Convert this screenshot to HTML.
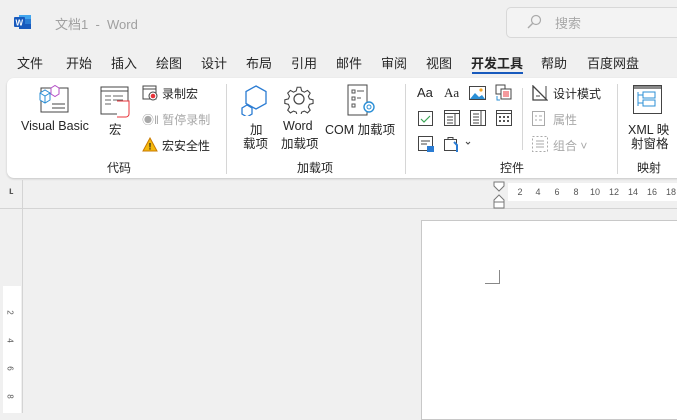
<!DOCTYPE html>
<html><head><meta charset="utf-8"><style>
*{margin:0;padding:0;box-sizing:border-box}
body{width:677px;height:413px;background:#f0f0f0;font-family:"Liberation Sans","Noto Sans CJK SC",sans-serif;position:relative;overflow:hidden;color:#262626}
.a{position:absolute;white-space:nowrap}
.t{font-size:13px;top:53px}
.r{font-size:12.5px}
.s{font-size:12px}
.g{color:#a8a8a8}
.sep{position:absolute;width:1px;background:#d6d6d6}
.n{position:absolute;top:187px;font-size:9px;color:#555;transform:translateX(-50%)}
.v{position:absolute;left:8px;font-size:8px;color:#555;transform:rotate(90deg)}
</style></head><body>
<svg class="a" style="left:14px;top:14px" width="18" height="16"><rect x="5" y="1" width="12" height="14" fill="#41a5ee"/><rect x="5" y="5" width="12" height="5" fill="#2b7cd3"/><rect x="5" y="10" width="12" height="5" fill="#185abd"/><rect x="0" y="3" width="11" height="10" rx="1" fill="#185abd"/><text x="1.5" y="11.5" font-size="8" fill="#fff" font-weight="bold" font-family="Liberation Sans">W</text></svg>
<div class="a" style="left:55px;top:14px;font-size:13px;color:#a0a0a0">文档1 &nbsp;- &nbsp;Word</div>
<div class="a" style="left:506px;top:7px;width:180px;height:31px;border:1px solid #d8d8d8;border-radius:5px;background:#f3f3f3"></div>
<svg class="a" style="left:526px;top:14px" width="16" height="16"><circle cx="10" cy="6" r="4.5" fill="none" stroke="#aaa" stroke-width="1.2"/><line x1="6.5" y1="9.5" x2="2" y2="14" stroke="#aaa" stroke-width="1.4"/></svg>
<div class="a" style="left:555px;top:13px;font-size:13px;color:#a8a8a8">搜索</div>
<div class="a t" style="left:17px">文件</div>
<div class="a t" style="left:66px">开始</div>
<div class="a t" style="left:111px">插入</div>
<div class="a t" style="left:156px">绘图</div>
<div class="a t" style="left:201px">设计</div>
<div class="a t" style="left:246px">布局</div>
<div class="a t" style="left:291px">引用</div>
<div class="a t" style="left:336px">邮件</div>
<div class="a t" style="left:381px">审阅</div>
<div class="a t" style="left:426px">视图</div>
<div class="a t" style="left:471px;font-weight:bold">开发工具</div>
<div class="a" style="left:472px;top:72px;width:51px;height:2px;background:#185abd"></div>
<div class="a t" style="left:541px">帮助</div>
<div class="a t" style="left:587px">百度网盘</div>
<div class="a" style="left:7px;top:78px;width:680px;height:100px;background:#fff;border-radius:7px;box-shadow:0 1px 2px rgba(0,0,0,.18)"></div>
<svg class="a" style="left:38px;top:84px" width="32" height="30"><rect x="3" y="4" width="27" height="24" fill="none" stroke="#444" stroke-width="1"/><line x1="14" y1="20" x2="27" y2="20" stroke="#444"/><line x1="14" y1="24" x2="27" y2="24" stroke="#444"/><path d="M2 9 l5-3 5 3v7l-5 3-5-3z" fill="#fff" stroke="#2b8fd6"/><path d="M2 9l5 3 5-3M7 12v7" fill="none" stroke="#2b8fd6"/><path d="M13 4l4-2.5 4 2.5v6l-4 2.5-4-2.5z" fill="#fff" stroke="#b44ec7"/></svg>
<div class="a r" style="left:21px;top:119px">Visual Basic</div>
<svg class="a" style="left:100px;top:86px" width="32" height="32"><rect x="1" y="1" width="27" height="27" fill="#fff" stroke="#444"/><line x1="1" y1="5" x2="28" y2="5" stroke="#444"/><path d="M5 10h6M13 10h10M5 14h6M13 14h10M5 18h6" stroke="#666"/><path d="M17 15h12v13c0 2-2 3-3 3h-9" fill="#fff" stroke="#e8333a"/></svg>
<div class="a r" style="left:109px;top:119px">宏</div>
<svg class="a" style="left:142px;top:85px" width="16" height="16"><rect x="1" y="1" width="13" height="13" fill="none" stroke="#444"/><line x1="1" y1="4" x2="14" y2="4" stroke="#444"/><circle cx="11" cy="11" r="4" fill="#fff" stroke="#444"/><circle cx="11" cy="11" r="2.3" fill="#e8333a"/></svg>
<div class="a s" style="left:162px;top:85px">录制宏</div>
<div class="a s g" style="left:142px;top:111px">◉ǁ 暂停录制</div>
<svg class="a" style="left:142px;top:137px" width="16" height="15"><path d="M8 1l7 13H1z" fill="#f5b90c" stroke="#c97a00"/><text x="6.5" y="12.5" font-size="9" font-weight="bold" fill="#222">!</text></svg>
<div class="a s" style="left:162px;top:137px">宏安全性</div>
<div class="a s" style="left:107px;top:159px">代码</div>
<div class="sep" style="left:226px;top:84px;height:90px"></div>
<svg class="a" style="left:240px;top:84px" width="32" height="32"><path d="M16 2l10 5.5v12L16 25 6 19.5v-12z" fill="none" stroke="#2b7cd3" stroke-width="1.3"/><path d="M7 21l5 3v6l-5 3-5-3v-6z" fill="#fff" stroke="#2b7cd3" stroke-width="1.3"/></svg>
<div class="a r" style="left:250px;top:119px">加</div>
<div class="a r" style="left:243px;top:133px">载项</div>
<svg class="a" style="left:284px;top:84px" width="30" height="30"><circle cx="15" cy="15" r="5" fill="none" stroke="#444" stroke-width="1.2"/><path d="M13 2h4l1 4 3 1.5 3.5-2 3 3-2 3.5 1.2 3 4 1v4l-4 1-1.2 3 2 3.5-3 3-3.5-2-3 1.2-1 4h-4l-1-4-3-1.2-3.5 2-3-3 2-3.5-1.2-3-4-1v-4l4-1 1.2-3-2-3.5 3-3 3.5 2 3-1.5z" fill="none" stroke="#444" stroke-width="1.2" transform="scale(.9) translate(1.6,1.6)"/></svg>
<div class="a r" style="left:283px;top:119px">Word</div>
<div class="a r" style="left:281px;top:133px">加载项</div>
<svg class="a" style="left:346px;top:84px" width="32" height="32"><path d="M2 1h19v30H2z" fill="#fff" stroke="#444"/><path d="M6 6h3v3H6zM6 13h3v3H6zM6 20h3v3H6zM11 7h7M11 14h4" fill="none" stroke="#555"/><circle cx="23" cy="23" r="5" fill="#fff" stroke="#2b8fd6" stroke-width="1.4"/><circle cx="23" cy="23" r="2" fill="none" stroke="#2b8fd6"/></svg>
<div class="a r" style="left:325px;top:119px">COM 加载项</div>
<div class="a s" style="left:297px;top:159px">加载项</div>
<div class="sep" style="left:405px;top:84px;height:90px"></div>
<div class="a" style="left:417px;top:85px;font-size:13px">Aa</div>
<div class="a" style="left:444px;top:85px;font-size:13px;font-family:'Liberation Serif',serif">Aa</div>
<svg class="a" style="left:469px;top:86px" width="17" height="14"><rect x=".5" y=".5" width="16" height="13" fill="#fff" stroke="#444"/><path d="M1 13l5-6 4 4 3-2 3 4z" fill="#2b8fd6"/><circle cx="12" cy="4" r="1.6" fill="#f5a623"/></svg>
<svg class="a" style="left:495px;top:84px" width="17" height="18"><rect x="1" y="1" width="9" height="9" fill="#fff" stroke="#444"/><rect x="6" y="5" width="10" height="10" fill="#fff" stroke="#444"/><path d="M8 8h6M8 10h6M8 12h6" stroke="#e8333a"/><path d="M2 12v4h3" fill="none" stroke="#2b8fd6"/></svg>
<svg class="a" style="left:418px;top:111px" width="15" height="15"><rect x=".5" y=".5" width="14" height="14" fill="#fff" stroke="#444"/><path d="M3 8l3 3 6-6" fill="none" stroke="#3aa655" stroke-width="1.2"/></svg>
<svg class="a" style="left:444px;top:110px" width="16" height="16"><rect x=".5" y=".5" width="15" height="15" fill="none" stroke="#444"/><path d="M.5 3.5h15M11 3.5v12M3 7h6M3 10h6M3 13h6" stroke="#444"/></svg>
<svg class="a" style="left:470px;top:110px" width="16" height="16"><rect x=".5" y=".5" width="15" height="15" fill="none" stroke="#444"/><path d="M11 .5v15M3 4h6M3 7h6M3 10h6M3 13h6" stroke="#444"/></svg>
<svg class="a" style="left:496px;top:110px" width="16" height="16"><rect x=".5" y=".5" width="15" height="15" fill="none" stroke="#444"/><path d="M.5 3.5h15" stroke="#444"/><path d="M3 6h2v2H3zM7 6h2v2H7zM11 6h2v2h-2zM3 10h2v2H3zM7 10h2v2H7zM11 10h2v2h-2z" fill="#555"/></svg>
<svg class="a" style="left:418px;top:136px" width="17" height="17"><rect x=".5" y=".5" width="14" height="14" fill="none" stroke="#444"/><path d="M3 5h9M3 8h6" stroke="#444"/><rect x="9" y="10" width="7" height="6" fill="#2b7cd3"/></svg>
<svg class="a" style="left:444px;top:136px" width="28" height="17"><rect x=".5" y="3.5" width="12" height="11" fill="none" stroke="#444"/><path d="M4 3.5v-2h5v2" fill="none" stroke="#444"/><path d="M10 6l3 3v7" stroke="#2b7cd3" stroke-width="2" fill="none"/><path d="M22 6l2 2 2-2" fill="none" stroke="#444"/></svg>
<div class="sep" style="left:522px;top:88px;height:62px"></div>
<svg class="a" style="left:532px;top:85px" width="16" height="16"><path d="M1 1l14 14H1z" fill="none" stroke="#444" stroke-width="1.3"/><path d="M4 11h4" stroke="#444"/><path d="M14 1v14" stroke="#444"/></svg>
<div class="a s" style="left:553px;top:85px">设计模式</div>
<svg class="a" style="left:532px;top:111px" width="14" height="16"><rect x=".5" y=".5" width="12" height="14" fill="none" stroke="#aaa"/><path d="M3 5h2M7 5h3M3 9h2M7 9h3" stroke="#aaa"/></svg>
<div class="a s g" style="left:553px;top:111px">属性</div>
<svg class="a" style="left:532px;top:136px" width="16" height="16"><rect x=".5" y=".5" width="15" height="15" fill="none" stroke="#aaa" stroke-dasharray="2 2"/><path d="M4 5h8M4 8h8M4 11h8" stroke="#aaa"/></svg>
<div class="a s g" style="left:553px;top:137px">组合 ˅</div>
<div class="a s" style="left:500px;top:159px">控件</div>
<div class="sep" style="left:617px;top:84px;height:90px"></div>
<svg class="a" style="left:633px;top:85px" width="30" height="30"><rect x=".5" y=".5" width="28" height="28" fill="#fff" stroke="#444"/><rect x="1" y="1" width="27" height="3" fill="#888"/><path d="M5 7v14M5 10h5M5 18h5" stroke="#2b8fd6" fill="none"/><rect x="10" y="7" width="12" height="6" fill="none" stroke="#2b8fd6"/><rect x="10" y="15" width="12" height="6" fill="none" stroke="#2b8fd6"/></svg>
<div class="a r" style="left:628px;top:119px">XML 映</div>
<div class="a r" style="left:631px;top:133px">射窗格</div>
<div class="a s" style="left:637px;top:159px">映射</div>
<div class="a" style="left:9px;top:186px;font-size:10px;font-weight:bold;color:#555">ʟ</div>
<div class="a" style="left:22px;top:180px;width:1px;height:233px;background:#d4d4d4"></div>
<div class="a" style="left:0;top:208px;width:677px;height:1px;background:#d4d4d4"></div>
<div class="a" style="left:508px;top:183px;width:169px;height:18px;background:#fff"></div>
<svg class="a" style="left:493px;top:181px" width="12" height="28"><path d="M1 1h10v4l-5 5-5-5z" fill="#fff" stroke="#777"/><path d="M1 19l5-5 5 5v8H1zM1 21h10" fill="#fff" stroke="#777"/></svg>
<span class="n" style="left:520px">2</span><span class="n" style="left:538px">4</span><span class="n" style="left:557px">6</span><span class="n" style="left:576px">8</span><span class="n" style="left:595px">10</span><span class="n" style="left:614px">12</span><span class="n" style="left:633px">14</span><span class="n" style="left:652px">16</span><span class="n" style="left:671px">18</span>
<div class="a" style="left:3px;top:286px;width:18px;height:127px;background:#fff"></div>
<span class="v" style="top:308px">2</span><span class="v" style="top:336px">4</span><span class="v" style="top:364px">6</span><span class="v" style="top:392px">8</span>
<div class="a" style="left:421px;top:220px;width:260px;height:200px;background:#fff;border:1px solid #c8c8c8"></div>
<div class="a" style="left:485px;top:270px;width:15px;height:14px;border-right:1px solid #888;border-bottom:1px solid #888"></div>
</body></html>
